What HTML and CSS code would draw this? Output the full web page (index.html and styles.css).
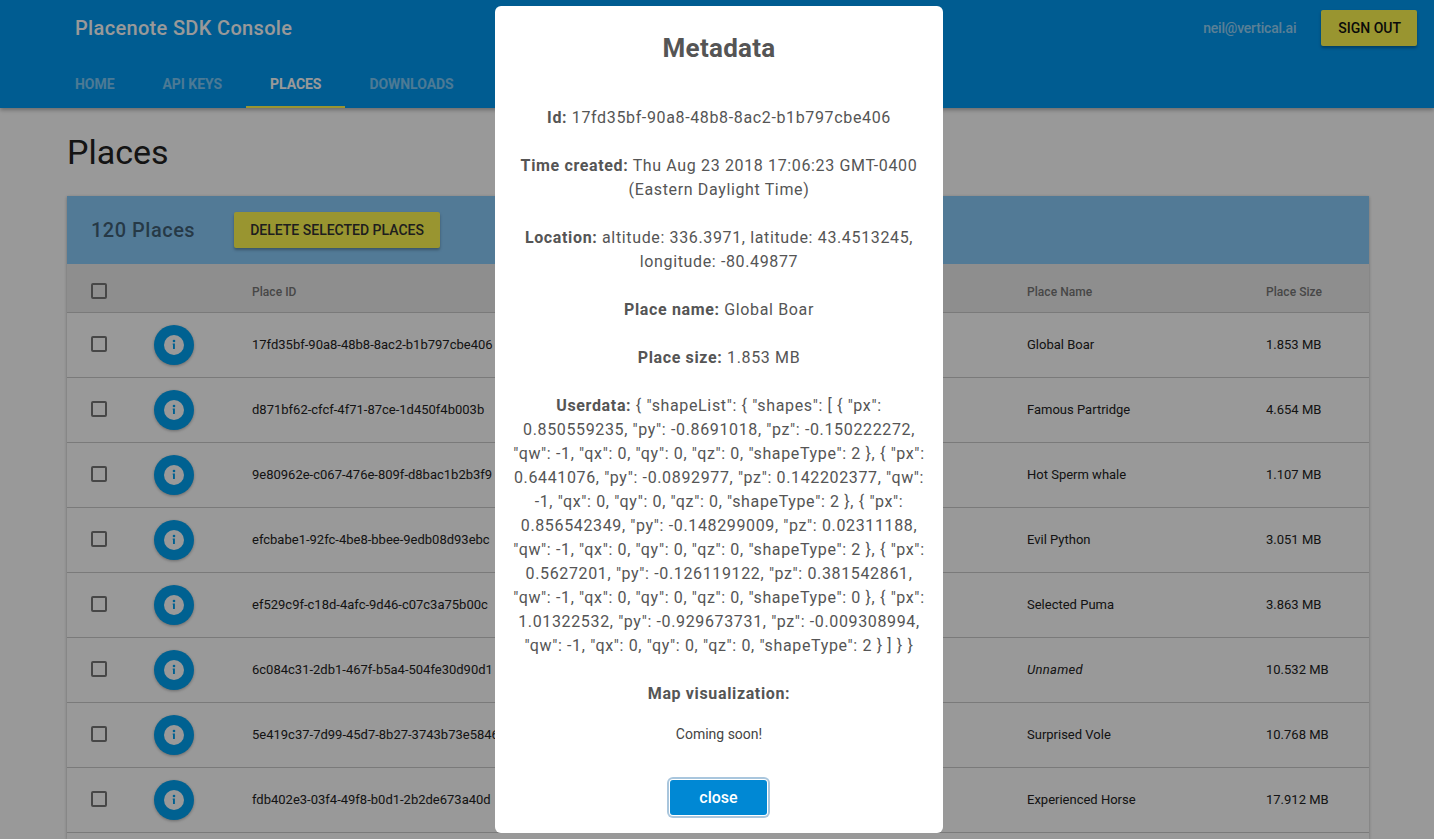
FILE: index.html
```html
<!DOCTYPE html>
<html>
<head>
    <meta charset="UTF-8">
    <title>Placenote SDK Console</title>
    <link rel="stylesheet" href="styles.css">
</head>
<body>
    <header class="topbar">
        <div class="topRow">
            <div class="brand">Placenote SDK Console</div>
            <div class="account">
                <span class="email">neil@vertical.ai</span>
                <div class="btn signOut">SIGN OUT</div>
            </div>
        </div>
        <nav class="tabs">
            <div class="tab">HOME</div>
            <div class="tab">API KEYS</div>
            <div class="tab active">PLACES</div>
            <div class="tab">DOWNLOADS</div>
        </nav>
    </header>

    <main class="content">
        <h1 class="pageTitle">Places</h1>
        <section class="panel">
            <div class="band">
                <div class="count">120 Places</div>
                <div class="btn deleteBtn">DELETE SELECTED PLACES</div>
            </div>
            <div class="row headRow">
                <div class="checkCell"><span class="check"></span></div>
                <div class="infoCell"></div>
                <div class="idCell">Place ID</div>
                <div class="nameCell">Place Name</div>
                <div class="sizeCell">Place Size</div>
            </div>
            <div class="row">
                <div class="checkCell"><span class="check"></span></div>
                <div class="infoCell"><span class="infoBtn"><svg viewBox="0 0 20 20"><circle cx="10" cy="10" r="10" fill="#fff"/><circle cx="10" cy="6" r="1.3" fill="#00a2f2"/><path d="M8.7 8.6h2.2v5.4h-1.9v-4.3h-.3z" fill="#00a2f2"/></svg></span></div>
                <div class="idCell">17fd35bf-90a8-48b8-8ac2-b1b797cbe406</div>
                <div class="nameCell">Global Boar</div>
                <div class="sizeCell">1.853 MB</div>
            </div>
            <div class="row">
                <div class="checkCell"><span class="check"></span></div>
                <div class="infoCell"><span class="infoBtn"><svg viewBox="0 0 20 20"><circle cx="10" cy="10" r="10" fill="#fff"/><circle cx="10" cy="6" r="1.3" fill="#00a2f2"/><path d="M8.7 8.6h2.2v5.4h-1.9v-4.3h-.3z" fill="#00a2f2"/></svg></span></div>
                <div class="idCell">d871bf62-cfcf-4f71-87ce-1d450f4b003b</div>
                <div class="nameCell">Famous Partridge</div>
                <div class="sizeCell">4.654 MB</div>
            </div>
            <div class="row">
                <div class="checkCell"><span class="check"></span></div>
                <div class="infoCell"><span class="infoBtn"><svg viewBox="0 0 20 20"><circle cx="10" cy="10" r="10" fill="#fff"/><circle cx="10" cy="6" r="1.3" fill="#00a2f2"/><path d="M8.7 8.6h2.2v5.4h-1.9v-4.3h-.3z" fill="#00a2f2"/></svg></span></div>
                <div class="idCell">9e80962e-c067-476e-809f-d8bac1b2b3f9</div>
                <div class="nameCell">Hot Sperm whale</div>
                <div class="sizeCell">1.107 MB</div>
            </div>
            <div class="row">
                <div class="checkCell"><span class="check"></span></div>
                <div class="infoCell"><span class="infoBtn"><svg viewBox="0 0 20 20"><circle cx="10" cy="10" r="10" fill="#fff"/><circle cx="10" cy="6" r="1.3" fill="#00a2f2"/><path d="M8.7 8.6h2.2v5.4h-1.9v-4.3h-.3z" fill="#00a2f2"/></svg></span></div>
                <div class="idCell">efcbabe1-92fc-4be8-bbee-9edb08d93ebc</div>
                <div class="nameCell">Evil Python</div>
                <div class="sizeCell">3.051 MB</div>
            </div>
            <div class="row">
                <div class="checkCell"><span class="check"></span></div>
                <div class="infoCell"><span class="infoBtn"><svg viewBox="0 0 20 20"><circle cx="10" cy="10" r="10" fill="#fff"/><circle cx="10" cy="6" r="1.3" fill="#00a2f2"/><path d="M8.7 8.6h2.2v5.4h-1.9v-4.3h-.3z" fill="#00a2f2"/></svg></span></div>
                <div class="idCell">ef529c9f-c18d-4afc-9d46-c07c3a75b00c</div>
                <div class="nameCell">Selected Puma</div>
                <div class="sizeCell">3.863 MB</div>
            </div>
            <div class="row">
                <div class="checkCell"><span class="check"></span></div>
                <div class="infoCell"><span class="infoBtn"><svg viewBox="0 0 20 20"><circle cx="10" cy="10" r="10" fill="#fff"/><circle cx="10" cy="6" r="1.3" fill="#00a2f2"/><path d="M8.7 8.6h2.2v5.4h-1.9v-4.3h-.3z" fill="#00a2f2"/></svg></span></div>
                <div class="idCell">6c084c31-2db1-467f-b5a4-504fe30d90d1</div>
                <div class="nameCell unnamed">Unnamed</div>
                <div class="sizeCell">10.532 MB</div>
            </div>
            <div class="row">
                <div class="checkCell"><span class="check"></span></div>
                <div class="infoCell"><span class="infoBtn"><svg viewBox="0 0 20 20"><circle cx="10" cy="10" r="10" fill="#fff"/><circle cx="10" cy="6" r="1.3" fill="#00a2f2"/><path d="M8.7 8.6h2.2v5.4h-1.9v-4.3h-.3z" fill="#00a2f2"/></svg></span></div>
                <div class="idCell">5e419c37-7d99-45d7-8b27-3743b73e5846</div>
                <div class="nameCell">Surprised Vole</div>
                <div class="sizeCell">10.768 MB</div>
            </div>
            <div class="row">
                <div class="checkCell"><span class="check"></span></div>
                <div class="infoCell"><span class="infoBtn"><svg viewBox="0 0 20 20"><circle cx="10" cy="10" r="10" fill="#fff"/><circle cx="10" cy="6" r="1.3" fill="#00a2f2"/><path d="M8.7 8.6h2.2v5.4h-1.9v-4.3h-.3z" fill="#00a2f2"/></svg></span></div>
                <div class="idCell">fdb402e3-03f4-49f8-b0d1-2b2de673a40d</div>
                <div class="nameCell">Experienced Horse</div>
                <div class="sizeCell">17.912 MB</div>
            </div>
        </section>
    </main>

    <div class="overlay">
        <div class="modal">
            <h2 class="modalTitle">Metadata</h2>
            <div class="modalText">
                <p><b>Id:</b> 17fd35bf-90a8-48b8-8ac2-b1b797cbe406</p>
                <p><b>Time created:</b> Thu Aug 23 2018 17:06:23 GMT-0400 (Eastern Daylight Time)</p>
                <p><b>Location:</b> altitude: 336.3971, latitude: 43.4513245, longitude: -80.49877</p>
                <p><b>Place name:</b> Global Boar</p>
                <p><b>Place size:</b> 1.853 MB</p>
                <p><b>Userdata:</b> { "shapeList": { "shapes": [ { "px": 0.850559235, "py": -0.8691018, "pz": -0.150222272, "qw": -1, "qx": 0, "qy": 0, "qz": 0, "shapeType": 2 }, { "px": 0.6441076, "py": -0.0892977, "pz": 0.142202377, "qw": -1, "qx": 0, "qy": 0, "qz": 0, "shapeType": 2 }, { "px": 0.856542349, "py": -0.148299009, "pz": 0.02311188, "qw": -1, "qx": 0, "qy": 0, "qz": 0, "shapeType": 2 }, { "px": 0.5627201, "py": -0.126119122, "pz": 0.381542861, "qw": -1, "qx": 0, "qy": 0, "qz": 0, "shapeType": 0 }, { "px": 1.01322532, "py": -0.929673731, "pz": -0.009308994, "qw": -1, "qx": 0, "qy": 0, "qz": 0, "shapeType": 2 } ] } }</p>
                <p><b>Map visualization:</b></p>
            </div>
            <div class="soon">Coming soon!</div>
            <div class="closeBtn">close</div>
        </div>
    </div>
</body>
</html>
```

FILE: styles.css
```css
* {
    margin: 0;
    padding: 0;
    box-sizing: border-box;
}
body {
    font-family: Roboto, "Liberation Sans", sans-serif;
    background: #fff;
    height: 839px;
    overflow: hidden;
    color: #222;
}

/* top bar */
.topbar {
    height: 108px;
    background: #0099f2;
    padding: 0 17px 0 75px;
    box-shadow: 0 2px 4px rgba(0,0,0,.3);
}
.topRow {
    display: flex;
    justify-content: space-between;
    align-items: center;
    height: 56px;
}
.brand {
    font-size: 20px;
    font-weight: 500;
    letter-spacing: .33px;
    color: #fff;
}
.account {
    display: flex;
    align-items: center;
    gap: 25px;
}
.email {
    font-size: 14px;
    font-weight: 500;
    letter-spacing: -.2px;
    color: rgba(255,255,255,.6);
}
.btn {
    background: #fff950;
    color: #111;
    font-size: 14px;
    font-weight: 500;
    border-radius: 2px;
    height: 36px;
    line-height: 36px;
    padding: 0 16px;
    box-shadow: 0 2px 3px rgba(0,0,0,.3);
}
.signOut {
    padding-left: 17px;
}
.tabs {
    display: flex;
    height: 52px;
    margin-left: -24px;
}
.tab {
    padding: 0 24px;
    font-size: 14px;
    font-weight: 700;
    letter-spacing: -.05px;
    line-height: 56px;
    color: rgba(255,255,255,.5);
}
.tab.active {
    color: #fff;
    border-bottom: 2px solid #fff950;
}

/* places panel */
.content {
    padding: 0 65px 0 67px;
}
.pageTitle {
    font-size: 34px;
    font-weight: 400;
    line-height: 40px;
    margin-top: 24px;
    margin-bottom: 24px;
    color: #222;
}
.panel {
    background: #fff;
    padding-bottom: 6px;
    box-shadow: 0 1px 3px rgba(0,0,0,.3);
}
.band {
    height: 68px;
    background: #89cbfa;
    display: flex;
    align-items: center;
    padding-left: 24px;
    gap: 39px;
}
.count {
    font-size: 20px;
    font-weight: 500;
    letter-spacing: .5px;
    color: rgba(0,0,0,.55);
}
.deleteBtn {
    color: #333;
}
.row {
    display: flex;
    align-items: center;
    height: 65px;
    padding-bottom: 2px;
    font-size: 13px;
    color: #222;
    border-bottom: 1px solid #ccc;
}
.headRow {
    height: 49px;
    padding: 6px 0 0;
    background: #ededed;
    font-size: 12px;
    font-weight: 500;
    letter-spacing: .05px;
    color: #777;
}
.headRow .idCell,
.headRow .nameCell,
.headRow .sizeCell {
    padding-top: 2px;
}
.checkCell {
    width: 87px;
    padding-left: 24px;
    display: flex;
}
.check {
    width: 16px;
    height: 16px;
    border: 2px solid #777;
    border-radius: 2px;
}
.infoCell {
    width: 98px;
}
.infoBtn {
    display: flex;
    align-items: center;
    justify-content: center;
    width: 40px;
    height: 40px;
    margin-top: 2px;
    border-radius: 50%;
    background: #00a2f2;
    box-shadow: 0 1px 3px rgba(0,0,0,.3);
}
.infoBtn svg {
    width: 20px;
    height: 20px;
}
.idCell {
    width: 775px;
    white-space: nowrap;
}
.nameCell {
    width: 239px;
}
.unnamed {
    font-style: italic;
    letter-spacing: .3px;
}

/* metadata dialog */
.overlay {
    position: fixed;
    top: 0;
    left: 0;
    right: 0;
    bottom: 0;
    background: rgba(0,0,0,.4);
}
.modal {
    position: absolute;
    top: 6px;
    left: 495px;
    width: 448px;
    height: 827px;
    background: #fff;
    border-radius: 6px;
    padding: 24px 16px 0;
    text-align: center;
    color: #555;
}
.modalTitle {
    font-size: 26px;
    font-weight: 700;
    letter-spacing: .25px;
    line-height: 36px;
    color: #555;
    margin-bottom: 40px;
}
.modalText p {
    font-size: 16px;
    line-height: 24px;
    letter-spacing: .64px;
    margin-bottom: 24px;
}
.soon {
    font-size: 14px;
    line-height: 20px;
    color: #444;
    margin-top: -6px;
}
.closeBtn {
    width: 97px;
    height: 35px;
    line-height: 35px;
    margin: 36px 0 0 159px;
    background: #0088d4;
    color: #fff;
    font-size: 16px;
    font-weight: 500;
    border-radius: 3px;
    box-shadow: 0 0 0 1px #fff, 0 0 0 3px #a9c6dd;
}
```
